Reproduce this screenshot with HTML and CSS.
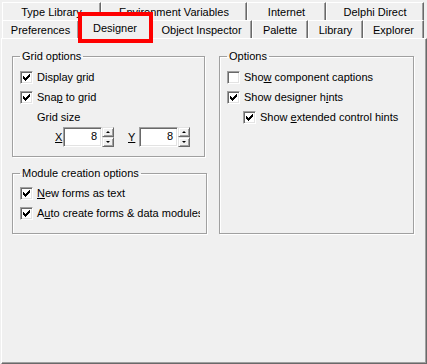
FILE: index.html
```html
<!DOCTYPE html>
<html lang="en">
<head>
  <meta charset="UTF-8" />
  <title>Environment Options - Designer</title>
  <link rel="stylesheet" href="styles.css">
</head>
<body>

  <div class="window">
    <div class="tabs">
      <div class="tab-row">
        <div class="tab t-typelib">Type Library</div>
        <div class="tab t-envvars">Environment Variables</div>
        <div class="tab t-internet">Internet</div>
        <div class="tab t-delphi">Delphi Direct</div>
      </div>
      <div class="tab-row front">
        <div class="tab t-prefs">Preferences</div>
        <div class="tab t-designer active">Designer<span class="highlight"></span></div>
        <div class="tab t-inspector">Object Inspector</div>
        <div class="tab t-palette">Palette</div>
        <div class="tab t-library">Library</div>
        <div class="tab t-explorer">Explorer</div>
      </div>
    </div>

    <div class="page">
      <div class="columns">
        <div class="col">
          <fieldset class="group grid-group">
            <legend>Grid options</legend>
            <div class="check">
              <span class="box"><svg width="7" height="7" viewBox="0 0 7 7"><path d="M0 2h1v3h-1zM1 3h1v3h-1zM2 4h1v3h-1zM3 3h1v3h-1zM4 2h1v3h-1zM5 1h1v3h-1zM6 0h1v3h-1z" fill="#000"/></svg></span>
              <span class="text">Display <u>g</u>rid</span>
            </div>
            <div class="check">
              <span class="box"><svg width="7" height="7" viewBox="0 0 7 7"><path d="M0 2h1v3h-1zM1 3h1v3h-1zM2 4h1v3h-1zM3 3h1v3h-1zM4 2h1v3h-1zM5 1h1v3h-1zM6 0h1v3h-1z" fill="#000"/></svg></span>
              <span class="text">Sna<u>p</u> to grid</span>
            </div>
            <div class="caption">Grid size</div>
            <div class="spin-row">
              <span class="spin-label"><u>X</u></span>
              <div class="spin">
                <span class="edit">8</span>
                <span class="spin-buttons">
                  <span class="spin-btn"><i class="arrow up"></i></span>
                  <span class="spin-btn"><i class="arrow down"></i></span>
                </span>
              </div>
              <span class="spin-label second"><u>Y</u></span>
              <div class="spin">
                <span class="edit">8</span>
                <span class="spin-buttons">
                  <span class="spin-btn"><i class="arrow up"></i></span>
                  <span class="spin-btn"><i class="arrow down"></i></span>
                </span>
              </div>
            </div>
          </fieldset>

          <fieldset class="group module-group">
            <legend>Module creation options</legend>
            <div class="check">
              <span class="box"><svg width="7" height="7" viewBox="0 0 7 7"><path d="M0 2h1v3h-1zM1 3h1v3h-1zM2 4h1v3h-1zM3 3h1v3h-1zM4 2h1v3h-1zM5 1h1v3h-1zM6 0h1v3h-1z" fill="#000"/></svg></span>
              <span class="text"><u>N</u>ew forms as text</span>
            </div>
            <div class="check clipped">
              <span class="box"><svg width="7" height="7" viewBox="0 0 7 7"><path d="M0 2h1v3h-1zM1 3h1v3h-1zM2 4h1v3h-1zM3 3h1v3h-1zM4 2h1v3h-1zM5 1h1v3h-1zM6 0h1v3h-1z" fill="#000"/></svg></span>
              <span class="text">A<u>u</u>to create forms &amp; data modules</span>
            </div>
          </fieldset>
        </div>

        <fieldset class="group options-group">
          <legend>Options</legend>
          <div class="check">
            <span class="box"></span>
            <span class="text">Sho<u>w</u> component captions</span>
          </div>
          <div class="check">
            <span class="box"><svg width="7" height="7" viewBox="0 0 7 7"><path d="M0 2h1v3h-1zM1 3h1v3h-1zM2 4h1v3h-1zM3 3h1v3h-1zM4 2h1v3h-1zM5 1h1v3h-1zM6 0h1v3h-1z" fill="#000"/></svg></span>
            <span class="text">Show designer h<u>i</u>nts</span>
          </div>
          <div class="check indent">
            <span class="box"><svg width="7" height="7" viewBox="0 0 7 7"><path d="M0 2h1v3h-1zM1 3h1v3h-1zM2 4h1v3h-1zM3 3h1v3h-1zM4 2h1v3h-1zM5 1h1v3h-1zM6 0h1v3h-1z" fill="#000"/></svg></span>
            <span class="text">Show <u>e</u>xtended control hints</span>
          </div>
        </fieldset>
      </div>
    </div>
  </div>

</body>
</html>
```

FILE: styles.css
```css
* {
  box-sizing: border-box;
}

body {
  margin: 0;
  background: #f0f0f0;
  font-family: "Liberation Sans", Arial, sans-serif;
  font-size: 11px;
  color: #000;
}

.window {
  width: 427px;
  height: 364px;
  background: #f0f0f0;
}

/* tabs */

.tabs {
  height: 38px;
  padding-top: 2px;
}

.tab-row {
  display: flex;
  height: 18px;
  margin-left: 2px;
}

.tab-row.front {
  align-items: flex-end;
}

.tab {
  height: 18px;
  padding-top: 1px;
  line-height: 16px;
  text-align: center;
  white-space: nowrap;
  background: #f0f0f0;
  border-top: 1px solid #fff;
  border-left: 1px solid #fff;
  border-right: 1px solid #696969;
  box-shadow: inset -1px 0 0 #a0a0a0;
}

.tab.active {
  position: relative;
  z-index: 1;
  height: 24px;
  padding-top: 2px;
  line-height: 20px;
  margin-bottom: -1px;
}

.highlight {
  position: absolute;
  left: -2px;
  top: -4px;
  width: 75px;
  height: 31px;
  border: 4px solid #f00;
}

.t-typelib { width: 99px; }
.t-envvars { width: 146px; }
.t-internet { width: 79px; }
.t-delphi { width: 98px; }
.t-prefs { width: 77px; }
.t-designer { width: 72px; }
.t-inspector { width: 101px; }
.t-palette { width: 56px; }
.t-library { width: 55px; }
.t-explorer { width: 61px; }

/* page */

.page {
  height: 326px;
  width: 426px;
  margin-left: 1px;
  padding: 11px 0 0 10px;
  border-top: 1px solid #fff;
  border-left: 1px solid #fff;
  border-right: 1px solid #696969;
  border-bottom: 1px solid #696969;
  box-shadow: inset -1px -1px 0 #a0a0a0;
}

.columns {
  display: grid;
  grid-template-columns: 195px 195px;
  column-gap: 12px;
}

.group {
  margin: 0;
  padding: 4px 7px 9px 7px;
  border: 1px solid #a0a0a0;
  box-shadow: 1px 1px 0 #fff, inset 1px 1px 0 #fff;
  min-width: 0;
}

.group legend {
  padding: 0 2px;
  line-height: 13px;
}

.grid-group {
  width: 193px;
}

.module-group {
  margin-top: 10px;
  padding-top: 3px;
  padding-bottom: 10px;
}

/* checkboxes */

.check {
  display: flex;
  align-items: center;
  height: 20px;
  white-space: nowrap;
}

.check.clipped {
  width: 180px;
  overflow: hidden;
}

.check.indent {
  margin-left: 16px;
}

.box {
  flex: none;
  display: flex;
  align-items: center;
  justify-content: center;
  width: 13px;
  height: 13px;
  margin-right: 4px;
  background: #fff;
  border: 1px solid;
  border-color: #a0a0a0 #fff #fff #a0a0a0;
  box-shadow: inset 1px 1px 0 #696969, inset -1px -1px 0 #e3e3e3;
}

.box svg {
  display: block;
  shape-rendering: crispEdges;
}

.caption {
  height: 20px;
  line-height: 20px;
  margin-left: 17px;
}

/* spin edits */

.spin-row {
  display: flex;
  align-items: center;
  height: 20px;
  padding-left: 35px;
}

.spin-label {
  width: 8px;
}

.spin-label.second {
  margin-left: 14px;
  width: 11px;
}

.spin {
  display: flex;
  height: 20px;
}

.edit {
  width: 39px;
  height: 20px;
  line-height: 16px;
  padding-right: 4px;
  text-align: right;
  background: #fff;
  border: 1px solid;
  border-color: #a0a0a0 #fff #fff #a0a0a0;
  box-shadow: inset 1px 1px 0 #696969, inset -1px -1px 0 #e3e3e3;
}

.spin-buttons {
  display: flex;
  flex-direction: column;
  width: 12px;
}

.spin-btn {
  display: flex;
  align-items: center;
  justify-content: center;
  height: 10px;
  background: #f0f0f0;
  border: 1px solid;
  border-color: #e3e3e3 #696969 #696969 #e3e3e3;
  box-shadow: inset 1px 1px 0 #fff, inset -1px -1px 0 #a0a0a0;
}

.arrow {
  width: 0;
  height: 0;
  border-left: 2px solid transparent;
  border-right: 2px solid transparent;
}

.arrow.up {
  border-bottom: 2px solid #000;
}

.arrow.down {
  border-top: 2px solid #000;
}
```
